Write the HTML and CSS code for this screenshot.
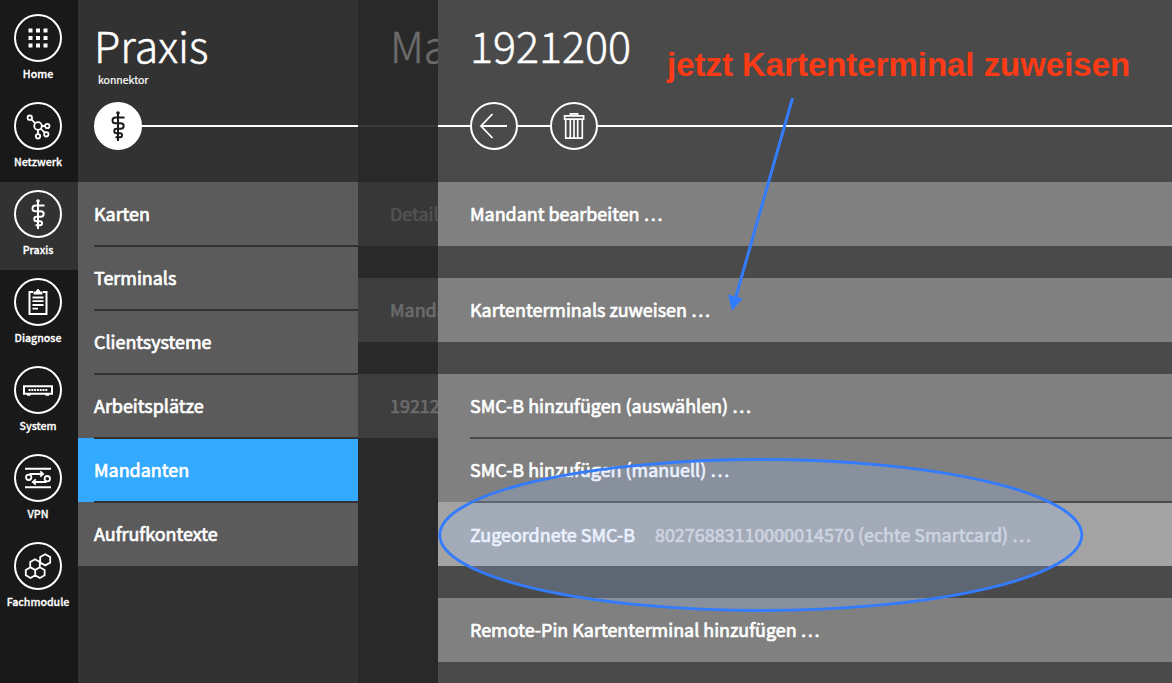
FILE: index.html
```html
<!DOCTYPE html>
<html lang="de">
<head>
<meta charset="utf-8">
<title>Praxis – Mandanten</title>
<link rel="stylesheet" href="styles.css">
</head>
<body>
<svg class="defs" width="0" height="0" aria-hidden="true">
  <symbol id="staff" viewBox="0 0 48 48">
    <circle cx="24" cy="11" r="1.800" fill="currentColor" stroke="none"/>
    <path d="M24 11v28" stroke-width="2"/>
    <path d="M30.500 15.500H21.500c-4 0-4 5.800 0 5.800H26.500c4.300 0 4.300 5.400 0 5.400h-4c-3 0-3 4.600 0 4.600h3.500c2.800 0 2.800 4 0 4H21.500" stroke-width="1.900"/>
  </symbol>
</svg>
<div class="app">
  <nav class="nav">
    <a class="nav-item">
      <svg class="ring" viewBox="0 0 48 48"><circle cx="24" cy="24" r="23"/><path class="solid" d="M14.500 14.500h4v4h-4zM22 14.500h4v4h-4zM29.500 14.500h4v4h-4zM14.500 22h4v4h-4zM22 22h4v4h-4zM29.500 22h4v4h-4zM14.500 29.500h4v4h-4zM22 29.500h4v4h-4zM29.500 29.500h4v4h-4z"/></svg>
      <span>Home</span>
    </a>
    <a class="nav-item">
      <svg class="ring" viewBox="0 0 48 48"><circle cx="24" cy="24" r="23"/><g class="thin"><circle cx="24" cy="24" r="3.800"/><circle cx="15.800" cy="15.700" r="2.200"/><circle cx="33.300" cy="24" r="2.200"/><circle cx="32.300" cy="32.300" r="2.200"/><circle cx="24" cy="34.300" r="2.200"/><path d="M17.400 17.300l3.900 4M27.800 24h3.300M26.700 26.700l4 4M24 27.800v4.300"/></g></svg>
      <span>Netzwerk</span>
    </a>
    <a class="nav-item active">
      <svg class="ring" viewBox="0 0 48 48"><circle cx="24" cy="24" r="23"/><use href="#staff"/></svg>
      <span>Praxis</span>
    </a>
    <a class="nav-item">
      <svg class="ring" viewBox="0 0 48 48"><circle cx="24" cy="24" r="23"/><path d="M19 14H15.500v22h17V14H29"/><path class="solid" d="M19.500 16.500v-3H22v-1.200h1.200V11h1.600v1.300H26v1.200h2.500v3z"/><path class="thin" d="M18.500 19.500h11M18.500 23.200h11M18.500 27h11M18.500 30.700h5.500"/></svg>
      <span>Diagnose</span>
    </a>
    <a class="nav-item">
      <svg class="ring" viewBox="0 0 48 48"><circle cx="24" cy="24" r="23"/><path class="router" d="M10 20.200h28v7.600H10z"/><path class="dots" d="M14.500 24h19"/><path class="solid" d="M13 28h3.500v1.700H13zM31.500 28H35v1.700h-3.500z"/></svg>
      <span>System</span>
    </a>
    <a class="nav-item">
      <svg class="ring" viewBox="0 0 48 48"><circle cx="24" cy="24" r="23"/><path d="M11 14.700h26M11 33.300h26"/><g class="thin"><circle cx="14.700" cy="23.300" r="2.700"/><circle cx="33.300" cy="24.700" r="2.700"/><path d="M15.500 20H29M26.200 17.300l3 2.700-3 2.700M32.500 28H19M21.800 25.300l-3 2.700 3 2.700"/></g></svg>
      <span>VPN</span>
    </a>
    <a class="nav-item">
      <svg class="ring" viewBox="0 0 48 48"><circle cx="24" cy="24" r="23"/><path class="thin" d="M31.200 12.200l5 2.800v5.600l-5 2.800-5-2.800V15zM21 17.300l4.800 2.700v5.300L21 28l-4.800-2.700V20zM16.500 25.200l4.700 2.700v5.400L16.500 36l-4.700-2.700v-5.400zM25.900 25.200l4.700 2.700v5.400L25.900 36l-4.700-2.700v-5.400z"/></svg>
      <span>Fachmodule</span>
    </a>
  </nav>

  <section class="panel panel-first">
    <header class="head">
      <h1>Praxis</h1>
      <p class="sub">konnektor</p>
      <div class="rail"><svg class="ring filled" viewBox="0 0 48 48"><circle cx="24" cy="24" r="23"/><use href="#staff"/></svg></div>
    </header>
    <ul class="list">
      <li>Karten</li>
      <li>Terminals</li>
      <li>Clientsysteme</li>
      <li>Arbeitsplätze</li>
      <li class="selected">Mandanten</li>
      <li>Aufrufkontexte</li>
    </ul>
  </section>

  <section class="panel panel-dimmed">
    <header class="head"><h1>Mandanten</h1><div class="rail"></div></header>
    <ul class="list"><li class="disabled">Details</li></ul>
    <ul class="list"><li>Mandant</li></ul>
    <ul class="list"><li>1921200</li></ul>
  </section>

  <section class="panel panel-detail">
    <header class="head">
      <h1>1921200</h1>
      <div class="rail">
        <svg class="ring" viewBox="0 0 48 48"><circle cx="24" cy="24" r="23"/><path class="thin" d="M37 24H11.500M22.500 12L11 24l11.500 12"/></svg>
        <svg class="ring" viewBox="0 0 48 48"><circle cx="24" cy="24" r="23"/><path class="trash" d="M14.600 13.800h19v3.400h-19zM20.500 13.800v-2h7v2M15.700 17.500v18.700h16.600V17.500M20.300 17.500v18.500M24 17.500v18.500M27.700 17.500v18.500"/></svg>
      </div>
    </header>
    <ul class="list"><li>Mandant bearbeiten …</li></ul>
    <ul class="list"><li>Kartenterminals zuweisen …</li></ul>
    <ul class="list">
      <li>SMC-B hinzufügen (auswählen) …</li>
      <li>SMC-B hinzufügen (manuell) …</li>
      <li class="assigned">Zugeordnete SMC-B<span class="value">80276883110000014570 (echte Smartcard) …</span></li>
    </ul>
    <ul class="list"><li>Remote-Pin Kartenterminal hinzufügen …</li></ul>
  </section>

  <svg class="marks" viewBox="0 0 1172 683">
    <ellipse cx="760.800" cy="535" rx="321" ry="75.500"/>
    <path class="shaft" d="M792.500 98L735 300"/>
    <path class="tip" d="M728 294.500L742.500 298.500L732 311z"/>
  </svg>
  <p class="note">jetzt Kartenterminal zuweisen</p>
</div>
</body>
</html>
```
FILE: styles.css
```css
* { box-sizing: border-box; margin: 0; padding: 0; }

body {
  width: 1172px;
  height: 683px;
  overflow: hidden;
  background: #4a4a4a;
  color: #fff;
  font-family: "Noto Sans CJK SC", "Noto Sans", sans-serif;
}

.defs { position: absolute; }

.app {
  position: relative;
  display: grid;
  grid-template-columns: 78px 280px 80px 1fr;
  height: 683px;
}

/* Icons */
.ring {
  display: block;
  flex: none;
  width: 48px;
  height: 48px;
  fill: none;
  stroke: currentColor;
  stroke-width: 2;
}
.ring .thin { stroke-width: 1.8; }
.ring .trash { stroke-width: 1.7; }
.ring .router { stroke-width: 2; }
.ring .dots { stroke-width: 2; stroke-dasharray: 2 0.8; }
.ring .solid { fill: currentColor; stroke: none; }
.ring.filled { color: #191919; }
.ring.filled > circle { fill: #fff; stroke: #fff; }

/* Main navigation */
.nav { background: #191919; }
.nav-item {
  display: flex;
  flex-direction: column;
  align-items: center;
  height: 88px;
  padding: 8px 2px 0 0;
  font-size: 10.6px;
  font-weight: 500;
  line-height: 16px;
  white-space: nowrap;
  -webkit-text-stroke: 0.3px currentColor;
}
.nav-item:first-child { height: 94px; padding-top: 14px; }
.nav-item span { margin-top: 4px; }
.nav-item.active { background: #323232; }

/* Panels */
.panel { min-width: 0; overflow: hidden; }
.head {
  display: flex;
  flex-direction: column;
  height: 182px;
  padding-left: 32px;
}
.head h1 {
  height: 72px;
  padding-top: 19px;
  font-size: 43px;
  font-weight: 300;
  line-height: 50px;
  white-space: nowrap;
  -webkit-text-stroke: 0.5px currentColor;
}
.sub {
  height: 16px;
  margin-bottom: -16px;
  padding-left: 4px;
  font-size: 10.5px;
  line-height: 16px;
  -webkit-text-stroke: 0.2px currentColor;
}
.rail {
  display: flex;
  gap: 32px;
  height: 48px;
  margin-top: 30px;
  margin-left: -32px;
  padding-left: 32px;
  background: linear-gradient(#fff, #fff) 0 23px / 100% 2px no-repeat;
}
.list { list-style: none; }
.list + .list { margin-top: 32px; }
.list li {
  position: relative;
  height: 64px;
  padding-left: 32px;
  font-size: 17.93px;
  font-weight: 400;
  line-height: 62px;
  white-space: nowrap;
  -webkit-text-stroke: 0.7px currentColor;
}
.list li + li::before {
  content: "";
  position: absolute;
  top: -1px;
  right: 0;
  left: 32px;
  height: 2px;
  background: #4a4a4a;
}

.panel-first { background: #323232; }
.panel-first .head { padding-left: 16px; }
.panel-first .rail { margin-left: 0; padding-left: 0; }
.panel-first .list li { padding-left: 16px; background: #5b5b5b; }
.panel-first .list li + li::before { left: 16px; background: #323232; }
.panel-first .list .selected { background: #33a9ff; }

.panel-dimmed { background: #292929; color: #6b6b6b; }
.panel-dimmed .rail { background-image: linear-gradient(#3a3a3a, #3a3a3a); }
.panel-dimmed .list li { background: #3e3e3e; }
.panel-dimmed .list .disabled { background: #373737; color: #525252; }

.panel-detail { background: #4a4a4a; }
.panel-detail .ring > circle { fill: #4a4a4a; }
.panel-detail .list li { background: #808080; }
.panel-detail .list .assigned { background: #a3a3a3; line-height: 64px; }
.value { margin-left: 20px; color: #d9d9d9; }

/* Annotations over the page */
.marks { position: absolute; inset: 0; width: 1172px; height: 683px; }
.marks ellipse { fill: rgba(165, 196, 255, 0.23); stroke: #337cff; stroke-width: 2.8; }
.marks .shaft { stroke: #337cff; stroke-width: 3; }
.marks .tip { fill: #337cff; }
.note {
  position: absolute;
  top: 45px;
  left: 667px;
  color: #ff3b16;
  font: 700 32.95px/40px "Liberation Sans", sans-serif;
  white-space: nowrap;
}
```
